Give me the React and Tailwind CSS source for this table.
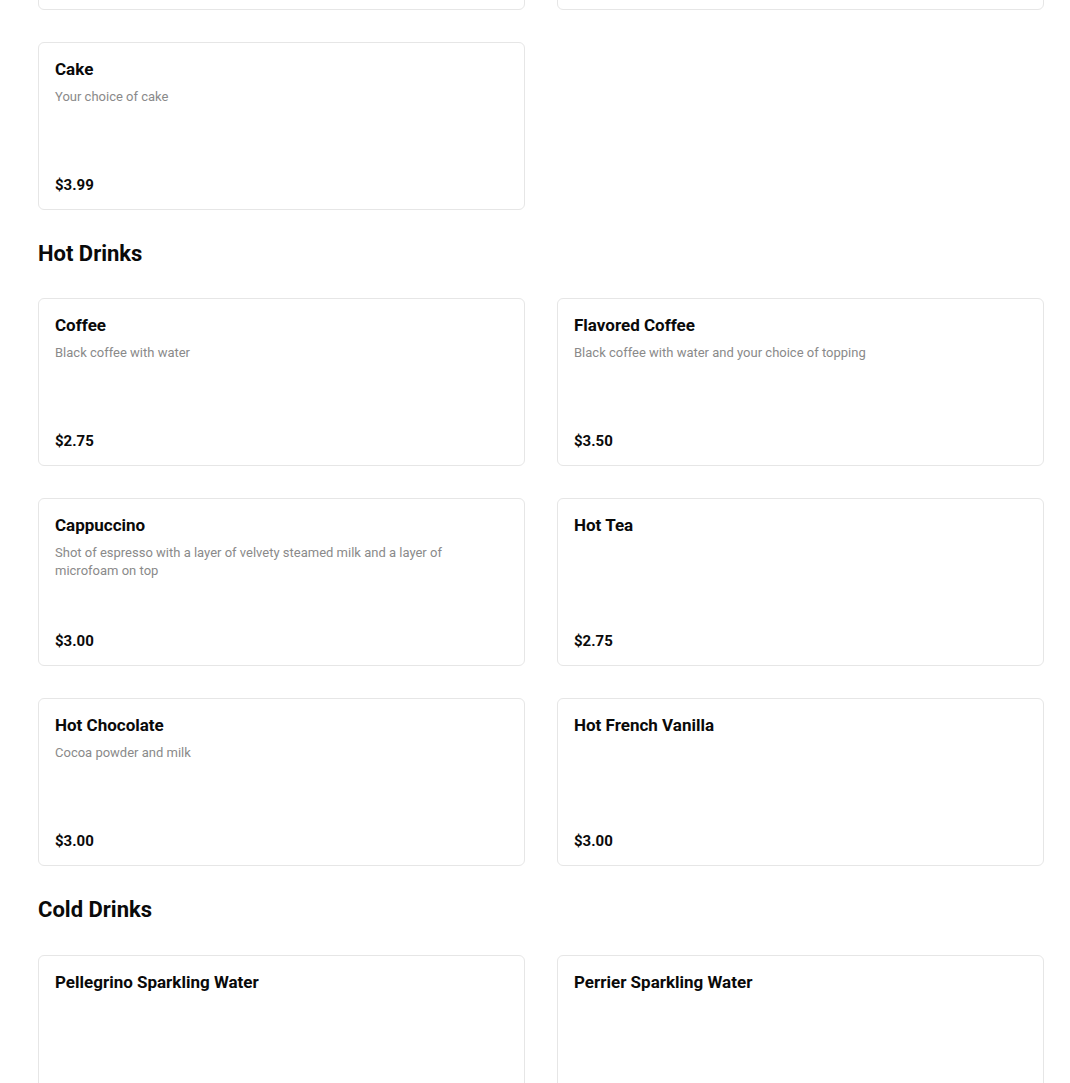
const sections = [
  {
    title: null,
    items: [
      { name: "", desc: "", price: "", hidden: true, key: "a" },
      { name: "", desc: "", price: "", hidden: true, key: "b" },
      { name: "Cake", desc: "Your choice of cake", price: "$3.99" },
    ],
  },
  {
    title: "Hot Drinks",
    headClass: "mb-[30px] mt-[30px]",
    items: [
      { name: "Coffee", desc: "Black coffee with water", price: "$2.75" },
      { name: "Flavored Coffee", desc: "Black coffee with water and your choice of topping", price: "$3.50" },
      { name: "Cappuccino", desc: "Shot of espresso with a layer of velvety steamed milk and a layer of microfoam on top", price: "$3.00" },
      { name: "Hot Tea", desc: "", price: "$2.75" },
      { name: "Hot Chocolate", desc: "Cocoa powder and milk", price: "$3.00" },
      { name: "Hot French Vanilla", desc: "", price: "$3.00" },
    ],
  },
  {
    title: "Cold Drinks",
    headClass: "mb-[31px] mt-[30px]",
    items: [
      { name: "Pellegrino Sparkling Water", desc: "", price: "$2.50" },
      { name: "Perrier Sparkling Water", desc: "", price: "$2.50" },
    ],
  },
];

function Card({ item }) {
  if (item.hidden) {
    return <div className="h-[168px] rounded-[6px] border border-[#e6e6e6] bg-white" />;
  }
  return (
    <div className="flex h-[168px] flex-col rounded-[6px] border border-[#e6e6e6] bg-white px-4 pb-[15px] pt-4">
      <div className="text-[17px] font-bold leading-5 text-[#0a0a0a]">{item.name}</div>
      {item.desc ? (
        <div className="mt-[9px] text-[13px] leading-[18px] text-[#8a8a8a]">{item.desc}</div>
      ) : null}
      <div className="mt-auto text-[15px] font-bold leading-[18px] text-[#0a0a0a]">{item.price}</div>
    </div>
  );
}

export default function App() {
  return (
    <div
      className="h-[1083px] overflow-hidden bg-white"
      style={{ fontFamily: "Roboto, 'Liberation Sans', sans-serif" }}
    >
      <div className="-mt-[158px] pl-[38px] pr-[26px]">
        {sections.map((s, i) => (
          <section key={i}>
            {s.title ? (
              <h2 className={`${s.headClass} text-[22px] font-bold leading-7 text-[#0a0a0a]`}>{s.title}</h2>
            ) : null}
            <div className="grid grid-cols-2 gap-8">
              {s.items.map((it) => (
                <Card key={it.key || it.name} item={it} />
              ))}
            </div>
          </section>
        ))}
      </div>
    </div>
  );
}
